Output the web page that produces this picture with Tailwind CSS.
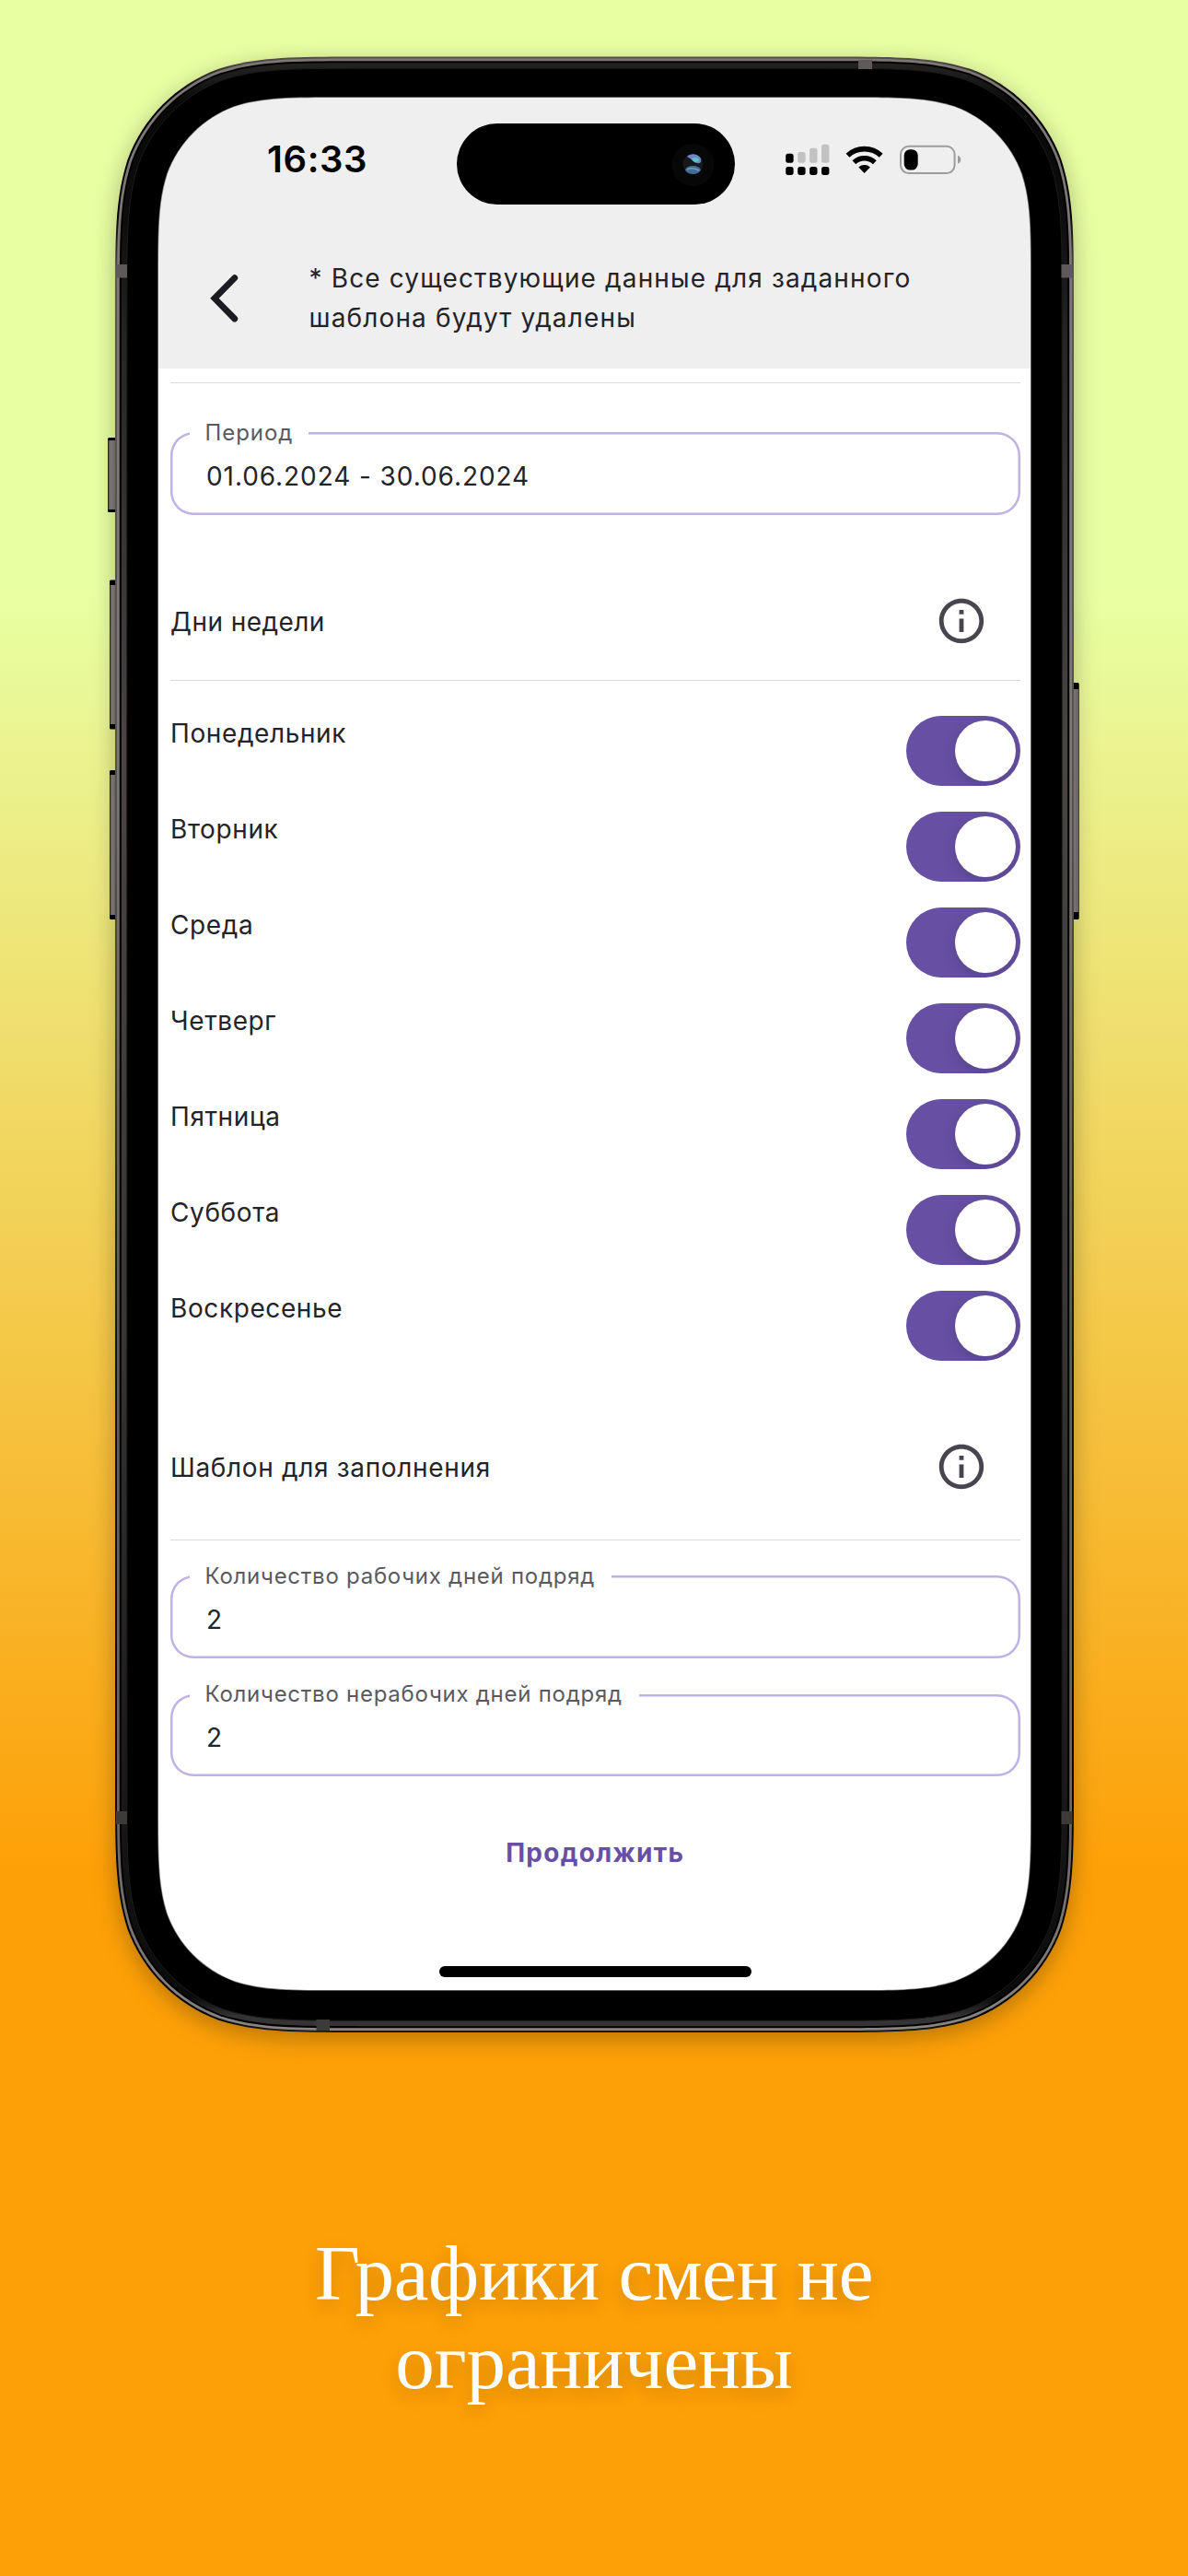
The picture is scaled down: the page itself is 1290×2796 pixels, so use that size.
<!DOCTYPE html>
<html lang="ru">
<head>
<meta charset="utf-8">
<title>Графики смен</title>
<script src="https://cdn.jsdelivr.net/npm/@tailwindcss/browser@4"></script>
</head>
<body class="bg-[#fda007]">
<main class="relative w-[1290px] h-[2796px] overflow-hidden bg-linear-to-b/srgb from-[#e8ffa2] from-[23.2%] to-[#fda007] to-[72.6%] font-['Inter',sans-serif] text-[#242327]">

  <!-- Phone body -->
  <svg class="absolute inset-0" width="1290" height="2796" viewBox="0 0 1290 2796" fill="none">
    <defs>
      <linearGradient id="edge" x1="0" y1="0" x2="0" y2="1">
        <stop offset="0" stop-color="#55504e"/><stop offset=".003" stop-color="#4a4644"/><stop offset=".02" stop-color="#000"/><stop offset=".08" stop-color="#000"/><stop offset=".11" stop-color="#5a5553"/><stop offset=".4" stop-color="#55504e"/><stop offset=".65" stop-color="#151414"/><stop offset=".99" stop-color="#000"/><stop offset="1" stop-color="#1a1918"/>
      </linearGradient>
      <linearGradient id="steel" x1="0" y1="0" x2="0" y2="1">
        <stop offset="0" stop-color="#7d7775"/><stop offset=".35" stop-color="#7d7876"/><stop offset=".65" stop-color="#5c5857"/><stop offset=".9" stop-color="#6b6766"/><stop offset="1" stop-color="#8a8584"/>
      </linearGradient>
      <linearGradient id="band" x1="0" y1="0" x2="0" y2="1">
        <stop offset="0" stop-color="#232221"/><stop offset=".008" stop-color="#1c1b1b"/><stop offset=".02" stop-color="#080808"/><stop offset=".08" stop-color="#0d0d0d"/><stop offset=".14" stop-color="#262524"/><stop offset=".35" stop-color="#4a4544"/><stop offset=".65" stop-color="#383534"/><stop offset=".88" stop-color="#1a1919"/><stop offset=".985" stop-color="#0a0a0a"/><stop offset=".995" stop-color="#353333"/>
      </linearGradient>
      <linearGradient id="key" x1="0" y1="0" x2="1" y2="0">
        <stop offset="0" stop-color="#55504f"/><stop offset=".3" stop-color="#7a7574"/><stop offset="1" stop-color="#66615f"/>
      </linearGradient>
      <filter id="shade" x="-10%" y="-10%" width="120%" height="120%"><feGaussianBlur stdDeviation="13"/></filter>
      <clipPath id="glass"><path data-inset="47" data-top="106" data-bottom="2160"/></clipPath>
    </defs>
    <path data-inset="0" fill="#000" fill-opacity=".28" filter="url(#shade)" transform="translate(0 7)"/>
    <g fill="#000">
      <rect x="117" y="475" width="10" height="81" rx="1.5"/><rect x="119" y="629.5" width="8" height="162" rx="1.5"/><rect x="119" y="836" width="8" height="162" rx="1.5"/><rect x="1164" y="741" width="7.7" height="257" rx="1.5"/>
    </g>
    <g fill="url(#key)">
      <rect x="117.5" y="478" width="9" height="75"/><rect x="119.5" y="635" width="7" height="151"/><rect x="119.5" y="841" width="7" height="152"/><rect x="1164" y="748" width="7.2" height="242"/>
    </g>
    <path data-inset="0" fill="url(#edge)"/>
    <path data-inset="2" fill="url(#steel)"/>
    <path data-inset="4.8" fill="#000"/>
    <path data-inset="6.8" fill="url(#band)"/>
    <path data-inset="12.8" fill="#000" stroke="#1c1b1b" stroke-width="1"/>
    <g fill="#5f5a59">
      <rect x="126" y="287" width="12" height="14.5"/><rect x="1152.5" y="287" width="12" height="14.5"/><rect x="932" y="65" width="15" height="10"/>
    </g>
    <g fill="#3d3b3a">
      <rect x="126" y="1966" width="12" height="14"/><rect x="1152.5" y="1966" width="12" height="14"/><rect x="343.5" y="2192" width="14.5" height="12"/>
    </g>
    <path data-inset="46.2" data-top="105.3" data-bottom="2160.8" fill="#777"/>
    <g clip-path="url(#glass)">
      <rect x="160" y="90" width="970" height="310" fill="#efeff0"/>
      <rect x="160" y="400" width="970" height="1770" fill="#fff"/>
    </g>
  </svg>

  <!-- Screen -->
  <section class="relative ml-[172px] mt-[106px] w-[948px]">
    <div class="flex h-[134px] items-center pl-[118px]">
      <div class="w-[206px] text-[40px] leading-[48px] font-semibold tracking-[0.6px] text-black">16:33</div>
      <svg class="mt-[10px] mr-[55px]" width="302" height="88" viewBox="0 0 302 88">
        <defs><clipPath id="lens"><circle cx="256.5" cy="44" r="11"/></clipPath></defs>
        <rect width="302" height="88" rx="44" fill="#000"/>
        <circle cx="256.5" cy="45" r="23" fill="#070707"/>
        <circle cx="256.5" cy="44" r="11" fill="#16181b"/>
        <g clip-path="url(#lens)">
          <path d="M250 36c3-4 12-4 15 2 1 4-1 6-4 5-4 0-5-4-11-7z" fill="#6f86c4"/>
          <path d="M255 38c3-2 7-1 8 1 0 2-2 3-4 3-2-1-3-2-4-4z" fill="#5cc0c4"/>
          <ellipse cx="256.5" cy="51" rx="8.500" ry="5" fill="#416d94"/>
          <path d="M250 50c4-2 9-1 13 1" stroke="#6c9ccb" stroke-width="1.500" fill="none"/>
        </g>
      </svg>
      <svg width="192" height="36" viewBox="853 155 192 36" fill="#000">
        <rect x="853.2" y="166.8" width="8.400" height="10" rx="2.500"/>
        <g fill="#c2c2c3"><rect x="866.2" y="165" width="8.400" height="11.800" rx="2.500"/><rect x="879.1" y="160.700" width="8.400" height="16.100" rx="2.500"/><rect x="892" y="156.800" width="8.400" height="20" rx="2.500"/></g>
        <rect x="853.2" y="181" width="8.400" height="9" rx="2.700"/><rect x="866.2" y="181" width="8.400" height="9" rx="2.700"/><rect x="879.1" y="181" width="8.400" height="9" rx="2.700"/><rect x="892" y="181" width="8.400" height="9" rx="2.700"/>
        <g fill="none" stroke="#000" stroke-width="5.600">
          <path d="M920.500 168.800A26.500 26.500 0 0 1 956.700 168.800"/>
          <path d="M927.400 176.200A16.400 16.400 0 0 1 949.800 176.200"/>
        </g>
        <path d="M938.600 188l-6.300-6.400a9.200 9.200 0 0 1 12.600 0z"/>
        <rect x="978" y="158.800" width="58.600" height="29.200" rx="8.800" fill="none" stroke="#9c9c9d" stroke-width="2"/>
        <rect x="981.700" y="162.200" width="15" height="22.400" rx="6.500"/>
        <path d="M1040 168.800c4.400 1.500 4.400 7.600 0 9z" fill="#9c9c9d"/>
      </svg>
    </div>
    <div class="flex h-[160px] items-center pt-[7px]">
      <svg class="ml-[53px]" width="40" height="60" viewBox="0 0 40 60" fill="none" stroke="#1c1b1f" stroke-width="6.800" stroke-linecap="round"><path d="M29.800 7.600L8 29.800L29.800 52"/></svg>
      <p class="ml-[70.500px] text-[28px] leading-[42.6px] tracking-[1.14px] whitespace-nowrap">* Все существующие данные для заданного<br>шаблона будут удалены</p>
    </div>

    <div class="w-[935.5px] pl-[13px] pt-[15px] text-[28px]">
      <div class="h-px bg-[#dad8e0]"></div>
      <div class="relative mt-[53px] flex h-[89.6px] items-center rounded-[25px] pt-[5.6px] pl-[39px] tracking-[0.92px] shadow-[inset_0_0_0_2.5px_#bfb2e5]">
        <span class="absolute left-[21px] top-[-14.4px] bg-white pl-[16.500px] pr-[17px] text-[24px] leading-[30px] tracking-[0.95px] text-[#5b595f]">Период</span>
        01.06.2024 - 30.06.2024
      </div>

      <div class="mt-[51.400px] flex h-[128px] items-center justify-between pr-[34.7px]">
        <h2 class="pt-[3px] tracking-[0.45px]">Дни недели</h2>
        <svg width="58" height="58" viewBox="0 0 24 24" fill="#49454f"><path d="M11 7h2v2h-2zm0 4h2v6h-2zm1-9C6.480 2 2 6.480 2 12s4.480 10 10 10 10-4.480 10-10S17.520 2 12 2zm0 18c-4.410 0-8-3.590-8-8s3.590-8 8-8 8 3.590 8 8-3.590 8-8 8z"/></svg>
      </div>
      <div class="h-px bg-[#dad8e0]"></div>

      <ul id="days" class="pt-[38.300px] leading-[38px] tracking-[0.6px]"></ul>

      <div class="mt-[22.700px] mb-[15px] flex h-[128px] items-center justify-between pr-[34.7px]">
        <h2 class="pt-[3px] tracking-[0.66px]">Шаблон для заполнения</h2>
        <svg width="58" height="58" viewBox="0 0 24 24" fill="#49454f"><path d="M11 7h2v2h-2zm0 4h2v6h-2zm1-9C6.480 2 2 6.480 2 12s4.480 10 10 10 10-4.480 10-10S17.520 2 12 2zm0 18c-4.410 0-8-3.590-8-8s3.590-8 8-8 8 3.590 8 8-3.590 8-8 8z"/></svg>
      </div>
      <div class="h-px bg-[#dad8e0]"></div>

      <div class="relative mt-[38.400px] flex h-[89.6px] items-center rounded-[25px] pt-[5.6px] pl-[39px] shadow-[inset_0_0_0_2.5px_#bfb2e5]">
        <span class="absolute left-[21px] top-[-14.4px] bg-white pl-[16.500px] pr-[18px] text-[24px] leading-[30px] tracking-[0.74px] whitespace-nowrap text-[#5b595f]">Количество рабочих дней подряд</span>
        2
      </div>
      <div class="relative mt-[38.700px] flex h-[89.6px] items-center rounded-[25px] pt-[5.6px] pl-[39px] shadow-[inset_0_0_0_2.5px_#bfb2e5]">
        <span class="absolute left-[21px] top-[-14.4px] bg-white pl-[16.500px] pr-[18px] text-[24px] leading-[30px] tracking-[0.74px] whitespace-nowrap text-[#5b595f]">Количество нерабочих дней подряд</span>
        2
      </div>
      <div class="mt-[62.300px] text-center leading-[40px] font-bold tracking-[1.3px] text-[#6750a4]">Продолжить</div>
    </div>
    <div class="mx-auto mt-[103.500px] h-[12.300px] w-[339px] rounded-full bg-black"></div>
  </section>

  <!-- Caption -->
  <h1 class="relative mt-[273px] text-center font-['Liberation_Serif',serif] text-[85px] leading-[96px] text-white [text-shadow:0_8px_20px_rgb(0_0_0/0.2)]"><span class="tracking-[-0.4px]"><span class="tracking-[-5.500px]">Г</span>рафики смен не</span><br>ограничены</h1>
</main>

<script>
// Rounded rectangle with continuous corners, inset from the phone's outer edge
function shell(inset, top, bottom) {
  const x = 125 + inset, y = top || 61.5 + inset, X = 1166 - inset, Y = bottom || 2206 - inset, r = 178 - inset;
  const corner = (cx, cy, sx, sy, swap) => {
    const p = (a, b) => swap ? (cx + sx * b * r) + ' ' + (cy + sy * a * r) : (cx + sx * a * r) + ' ' + (cy + sy * b * r);
    return p(1.5287, 0) + ' C' + p(1.0885, 0) + ' ' + p(0.8684, 0) + ' ' + p(0.6315, 0.0749) +
      ' C' + p(0.3728, 0.1691) + ' ' + p(0.1691, 0.3728) + ' ' + p(0.0749, 0.6315) +
      ' C' + p(0, 0.8684) + ' ' + p(0, 1.0885) + ' ' + p(0, 1.5287);
  };
  return 'M' + corner(X, y, -1, 1, false) + ' L' + corner(X, Y, -1, -1, true) +
    ' L' + corner(x, Y, 1, -1, false) + ' L' + corner(x, y, 1, 1, true) + 'Z';
}
document.querySelectorAll('[data-inset]').forEach(p =>
  p.setAttribute('d', shell(+p.dataset.inset, +p.dataset.top, +p.dataset.bottom)));

document.getElementById('days').innerHTML =
  ['Понедельник', 'Вторник', 'Среда', 'Четверг', 'Пятница', 'Суббота', 'Воскресенье'].map(d => `
  <li class="flex h-[104px] items-start justify-between">
    <span>${d}</span>
    <span class="flex h-[75.500px] w-[124px] items-center justify-end overflow-hidden rounded-full bg-[#6750a4] pr-[4.700px]">
      <span class="size-[66px] rounded-full bg-white shadow-[0_6px_16px_rgba(0,0,0,0.15)]"></span>
    </span>
  </li>`).join('');
</script>
</body>
</html>
